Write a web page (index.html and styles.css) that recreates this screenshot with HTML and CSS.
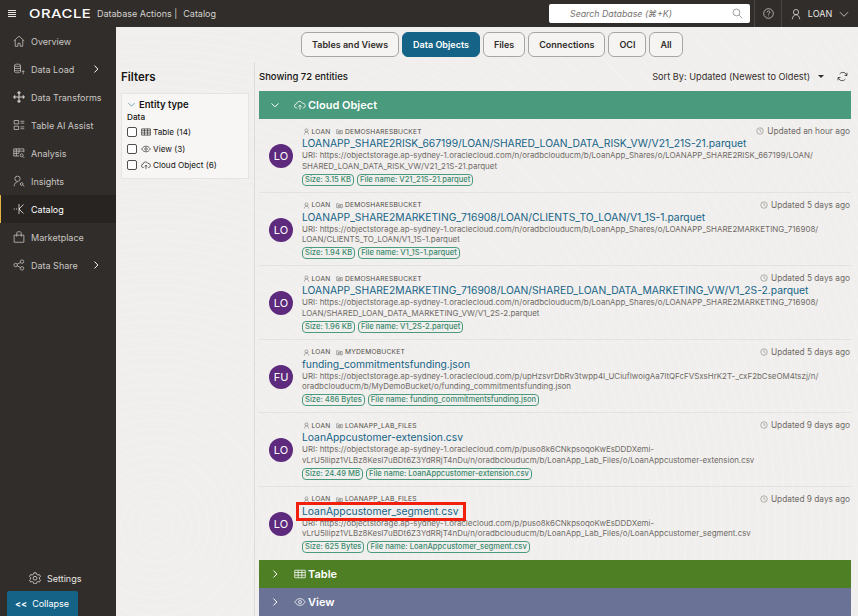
FILE: index.html
```html
<!DOCTYPE html>
<html>
  <head>
    <meta charset="utf-8">
    <title>Catalog</title>
    <link rel="stylesheet" href="styles.css">
  </head>
  <body>
    <svg class="defs" width="0" height="0">
      <symbol id="i-user" viewBox="0 0 16 16"><circle cx="8" cy="5.5" r="3.5"/><path d="M3 15c.5-4 2.500-6 5-6s4.500 2 5 6"/></symbol>
      <symbol id="i-bucket" viewBox="0 0 16 16"><path d="M1.500 13V4h4L7 5.500h7.500V13z"/><path d="M5 8h6v3H5z"/></symbol>
      <symbol id="i-clock" viewBox="0 0 16 16"><circle cx="8" cy="8" r="6.500"/><path d="M8 4v4l3 2"/></symbol>
      <symbol id="i-cloud" viewBox="0 0 16 16"><path d="M4.500 12h-1a2.700 2.700 0 0 1-.2-5.400A4 4 0 0 1 11 5.600 3.200 3.200 0 0 1 12.500 12h-1"/><path d="M8 14.500v-6M5.700 10.500 8 8.300l2.300 2.200"/></symbol>
      <symbol id="i-table" viewBox="0 0 16 16"><path d="M1 3h14v10H1zM1 6h14M1 9.500h14M5.500 3v10M10.500 3v10"/></symbol>
      <symbol id="i-eye" viewBox="0 0 16 16"><path d="M1 8c2-3 4.300-4.500 7-4.500s5 1.500 7 4.500c-2 3-4.300 4.500-7 4.500S3 11 1 8z"/><circle cx="8" cy="8" r="2"/></symbol>
      <symbol id="i-right" viewBox="0 0 16 16"><path d="M5.500 2.500 11 8l-5.500 5.500"/></symbol>
      <symbol id="i-down" viewBox="0 0 16 16"><path d="M2.500 5.500 8 11l5.500-5.500"/></symbol>
    </svg>

    <header class="topbar">
      <div class="hamburger"><span></span><span></span><span></span><span></span></div>
      <div class="logo">ORACLE</div>
      <div class="product">Database Actions |</div>
      <div class="product page-name">Catalog</div>
      <div class="search">
        <span>Search Database (⌘+K)</span>
        <svg class="icon search-icon" viewBox="0 0 16 16"><circle cx="6.500" cy="6.500" r="5"/><path d="M10.200 10.200 15 15"/></svg>
      </div>
      <div class="top-cell help-cell">
        <svg class="icon help-icon" viewBox="0 0 16 16"><circle cx="8" cy="8" r="7"/><path d="M6 6.300C6 5 7 4.300 8 4.300S10 5 10 6.200C10 7.700 8 7.800 8 9.500M8 11v1"/></svg>
      </div>
      <div class="top-cell user-cell">
        <svg class="icon user-icon"><use href="#i-user"/></svg>
        <span>LOAN</span>
        <svg class="icon user-chevron"><use href="#i-down"/></svg>
      </div>
    </header>

    <div class="shell">
      <nav class="sidebar">
        <a class="nav-item">
          <svg class="icon nav-icon" viewBox="0 0 16 16"><path d="M1 8 8 1.500 15 8M3 6.500V15h3.500v-4h3v4H13V6.500"/></svg>
          <span>Overview</span>
        </a>
        <a class="nav-item">
          <svg class="icon nav-icon" viewBox="0 0 16 16"><path d="M2 3c0-2 8-2 8 0v8.500c0 1-2 1.500-4 1.500s-4-.5-4-1.500zM2 3c0 2 8 2 8 0M2 6.500c1.500 1.300 6.500 1.300 8 0M2 9.500c1.500 1.300 6.500 1.300 8 0M13.500 15v-4.500M11.800 12l1.700-1.700 1.700 1.700"/></svg>
          <span>Data Load</span>
          <svg class="icon nav-chevron"><use href="#i-right"/></svg>
        </a>
        <a class="nav-item">
          <svg class="icon nav-icon" viewBox="0 0 16 16"><path d="M8 1v14M1 8h14M6 3l2-2 2 2M6 13l2 2 2-2M3 6 1 8l2 2M13 6l2 2-2 2" stroke-width="1.600"/></svg>
          <span>Data Transforms</span>
        </a>
        <a class="nav-item">
          <svg class="icon nav-icon" viewBox="0 0 16 16"><path d="M1.500 2h6v4.500h-6zM1.500 9.500h6V14h-6zM10 3h5M10 5.500h5M10 10.500h5M10 13h5"/></svg>
          <span>Table AI Assist</span>
        </a>
        <a class="nav-item">
          <svg class="icon nav-icon" viewBox="0 0 16 16"><path d="M8 12H1V2.500h13.500V7M1 5.500h13.500M1 8.500h7M4.500 2.500V12M8 2.500V8"/><circle cx="11.500" cy="11" r="2"/><path d="m13 12.500 2 2"/></svg>
          <span>Analysis</span>
        </a>
        <a class="nav-item">
          <svg class="icon nav-icon" viewBox="0 0 16 16"><circle cx="6" cy="5" r="3.500"/><path d="M1.500 15c.3-3.500 2-5.500 4.500-5.500"/><circle cx="11.500" cy="12" r="1.800"/><path d="m13 13.500 2 1.500"/></svg>
          <span>Insights</span>
        </a>
        <a class="nav-item nav-active">
          <svg class="icon nav-icon" viewBox="0 0 16 16"><path d="M1 8h1.500M4 8h1.500M14 2 8 8l6 6M8 8h1M8 1.500v13"/></svg>
          <span>Catalog</span>
        </a>
        <a class="nav-item">
          <svg class="icon nav-icon" viewBox="0 0 16 16"><path d="M1.500 5.500h13V15h-13zM5 7.500v-5C5 1.500 6 1 8 1s3 .5 3 1.500v5"/></svg>
          <span>Marketplace</span>
        </a>
        <a class="nav-item">
          <svg class="icon nav-icon" viewBox="0 0 16 16"><circle cx="3.500" cy="8" r="2.300"/><circle cx="12" cy="3.500" r="2.300"/><circle cx="12" cy="12.500" r="2.300"/><path d="m5.500 7 4.500-2.500M5.500 9l4.500 2.500"/></svg>
          <span>Data Share</span>
          <svg class="icon nav-chevron"><use href="#i-right"/></svg>
        </a>
        <div class="side-foot">
          <a class="settings">
            <svg class="icon settings-icon" viewBox="0 0 16 16"><path d="M6.500 1h3l.5 2 1.800 1 2-.6 1.500 2.600-1.500 1.400v2l1.500 1.400-1.500 2.600-2-.6-1.800 1-.5 2h-3l-.5-2-1.800-1-2 .6L.7 10.800l1.500-1.400v-2L.7 6l1.500-2.600 2 .6L6 3z"/><circle cx="8" cy="8.300" r="2.500"/></svg>
            <span>Settings</span>
          </a>
          <a class="collapse"><span class="collapse-arrows">&lt;&lt;</span><span>Collapse</span></a>
        </div>
      </nav>

      <main class="content">
        <div class="tabs">
          <a class="tab">Tables and Views</a>
          <a class="tab tab-on">Data Objects</a>
          <a class="tab">Files</a>
          <a class="tab">Connections</a>
          <a class="tab">OCI</a>
          <a class="tab">All</a>
        </div>

        <div class="columns">
          <aside class="filters">
            <h2 class="filters-title">Filters</h2>
            <div class="filter-card">
              <div class="filter-head">
                <svg class="icon filter-chevron"><use href="#i-down"/></svg>
                <span>Entity type</span>
              </div>
              <div class="filter-group">Data</div>
              <label class="filter-row"><span class="check"></span><svg class="icon filter-icon"><use href="#i-table"/></svg><span>Table (14)</span></label>
              <label class="filter-row"><span class="check"></span><svg class="icon filter-icon"><use href="#i-eye"/></svg><span>View (3)</span></label>
              <label class="filter-row"><span class="check"></span><svg class="icon filter-icon"><use href="#i-cloud"/></svg><span>Cloud Object (6)</span></label>
            </div>
          </aside>

          <section class="results">
            <div class="results-top">
              <span class="count">Showing 72 entities</span>
              <span class="sort">Sort By: Updated (Newest to Oldest)</span>
              <span class="caret"></span>
              <svg class="icon refresh" viewBox="0 0 16 16"><path d="M14 6.500C13.300 3.500 11 2 8.500 2 6.500 2 5 3 3.800 4.300M2 9.500C2.700 12.500 5 14 7.500 14c2 0 3.500-1 4.700-2.300"/><path d="M14.500 2.500v4H11M1.500 13.500v-4H5"/></svg>
            </div>

            <div class="band band-green">
              <svg class="icon band-chevron"><use href="#i-down"/></svg>
              <svg class="icon band-icon"><use href="#i-cloud"/></svg>
              <span>Cloud Object</span>
            </div>

            <article class="entity">
              <div class="avatar">LO</div>
              <div class="entity-body">
                <div class="meta"><svg class="icon meta-icon"><use href="#i-user"/></svg>LOAN<svg class="icon meta-icon meta-gap"><use href="#i-bucket"/></svg>DEMOSHARESBUCKET</div>
                <a class="entity-title">LOANAPP_SHARE2RISK_667199/LOAN/SHARED_LOAN_DATA_RISK_VW/V21_21S-21.parquet</a>
                <p class="uri">URI: https://objectstorage.ap-sydney-1.oraclecloud.com/n/oradbclouducm/b/LoanApp_Shares/o/LOANAPP_SHARE2RISK_667199/LOAN/<br>SHARED_LOAN_DATA_RISK_VW/V21_21S-21.parquet</p>
                <div class="chips"><span class="chip">Size: 3.15 KB</span><span class="chip">File name: V21_21S-21.parquet</span></div>
              </div>
              <div class="updated"><svg class="icon clock"><use href="#i-clock"/></svg>Updated an hour ago</div>
            </article>

            <article class="entity">
              <div class="avatar">LO</div>
              <div class="entity-body">
                <div class="meta"><svg class="icon meta-icon"><use href="#i-user"/></svg>LOAN<svg class="icon meta-icon meta-gap"><use href="#i-bucket"/></svg>DEMOSHARESBUCKET</div>
                <a class="entity-title">LOANAPP_SHARE2MARKETING_716908/LOAN/CLIENTS_TO_LOAN/V1_1S-1.parquet</a>
                <p class="uri">URI: https://objectstorage.ap-sydney-1.oraclecloud.com/n/oradbclouducm/b/LoanApp_Shares/o/LOANAPP_SHARE2MARKETING_716908/<br>LOAN/CLIENTS_TO_LOAN/V1_1S-1.parquet</p>
                <div class="chips"><span class="chip">Size: 1.94 KB</span><span class="chip">File name: V1_1S-1.parquet</span></div>
              </div>
              <div class="updated"><svg class="icon clock"><use href="#i-clock"/></svg>Updated 5 days ago</div>
            </article>

            <article class="entity">
              <div class="avatar">LO</div>
              <div class="entity-body">
                <div class="meta"><svg class="icon meta-icon"><use href="#i-user"/></svg>LOAN<svg class="icon meta-icon meta-gap"><use href="#i-bucket"/></svg>DEMOSHARESBUCKET</div>
                <a class="entity-title">LOANAPP_SHARE2MARKETING_716908/LOAN/SHARED_LOAN_DATA_MARKETING_VW/V1_2S-2.parquet</a>
                <p class="uri">URI: https://objectstorage.ap-sydney-1.oraclecloud.com/n/oradbclouducm/b/LoanApp_Shares/o/LOANAPP_SHARE2MARKETING_716908/<br>LOAN/SHARED_LOAN_DATA_MARKETING_VW/V1_2S-2.parquet</p>
                <div class="chips"><span class="chip">Size: 1.96 KB</span><span class="chip">File name: V1_2S-2.parquet</span></div>
              </div>
              <div class="updated"><svg class="icon clock"><use href="#i-clock"/></svg>Updated 5 days ago</div>
            </article>

            <article class="entity">
              <div class="avatar">FU</div>
              <div class="entity-body">
                <div class="meta"><svg class="icon meta-icon"><use href="#i-user"/></svg>LOAN<svg class="icon meta-icon meta-gap"><use href="#i-bucket"/></svg>MYDEMOBUCKET</div>
                <a class="entity-title">funding_commitmentsfunding.json</a>
                <p class="uri">URI: https://objectstorage.ap-sydney-1.oraclecloud.com/p/upHzsvrDbRv3twpp4I_UCiufIwoigAa7ItQFcFVSxsHrK2T-_cxF2bCseOM4tszj/n/<br>oradbclouducm/b/MyDemoBucket/o/funding_commitmentsfunding.json</p>
                <div class="chips"><span class="chip">Size: 486 Bytes</span><span class="chip">File name: funding_commitmentsfunding.json</span></div>
              </div>
              <div class="updated"><svg class="icon clock"><use href="#i-clock"/></svg>Updated 5 days ago</div>
            </article>

            <article class="entity">
              <div class="avatar">LO</div>
              <div class="entity-body">
                <div class="meta"><svg class="icon meta-icon"><use href="#i-user"/></svg>LOAN<svg class="icon meta-icon meta-gap"><use href="#i-bucket"/></svg>LOANAPP_LAB_FILES</div>
                <a class="entity-title">LoanAppcustomer-extension.csv</a>
                <p class="uri">URI: https://objectstorage.ap-sydney-1.oraclecloud.com/p/puso8k6CNkpsoqoKwEsDDDXemi-<br>vLrU5Ilipz1VLBz8KesI7uBDt6Z3YdRRjT4nDu/n/oradbclouducm/b/LoanApp_Lab_Files/o/LoanAppcustomer-extension.csv</p>
                <div class="chips"><span class="chip">Size: 24.49 MB</span><span class="chip">File name: LoanAppcustomer-extension.csv</span></div>
              </div>
              <div class="updated"><svg class="icon clock"><use href="#i-clock"/></svg>Updated 9 days ago</div>
            </article>

            <article class="entity entity-last">
              <div class="avatar">LO</div>
              <div class="entity-body">
                <div class="meta"><svg class="icon meta-icon"><use href="#i-user"/></svg>LOAN<svg class="icon meta-icon meta-gap"><use href="#i-bucket"/></svg>LOANAPP_LAB_FILES</div>
                <a class="entity-title entity-marked">LoanAppcustomer_segment.csv</a>
                <p class="uri">URI: https://objectstorage.ap-sydney-1.oraclecloud.com/p/puso8k6CNkpsoqoKwEsDDDXemi-<br>vLrU5Ilipz1VLBz8KesI7uBDt6Z3YdRRjT4nDu/n/oradbclouducm/b/LoanApp_Lab_Files/o/LoanAppcustomer_segment.csv</p>
                <div class="chips"><span class="chip">Size: 625 Bytes</span><span class="chip">File name: LoanAppcustomer_segment.csv</span></div>
              </div>
              <div class="updated"><svg class="icon clock"><use href="#i-clock"/></svg>Updated 9 days ago</div>
            </article>

            <div class="band band-olive">
              <svg class="icon band-chevron"><use href="#i-right"/></svg>
              <svg class="icon band-icon"><use href="#i-table"/></svg>
              <span>Table</span>
            </div>
            <div class="band band-slate">
              <svg class="icon band-chevron"><use href="#i-right"/></svg>
              <svg class="icon band-icon"><use href="#i-eye"/></svg>
              <span>View</span>
            </div>
          </section>
        </div>
      </main>
    </div>
  </body>
</html>
```

FILE: styles.css
```css
* {
  box-sizing: border-box;
}

html, body {
  margin: 0;
  height: 100%;
  overflow: hidden;
}

body {
  font-family: Inter, "Liberation Sans", sans-serif;
  font-size: 9px;
  color: #161513;
  background-color: #f1efed;
}

.defs {
  position: absolute;
}

.icon {
  display: block;
  flex: none;
  fill: none;
  stroke: currentColor;
  stroke-width: 1;
}

/* top bar */
.topbar {
  display: flex;
  align-items: center;
  height: 27px;
  background-color: #312d2a;
  color: #e8e6e3;
}

.hamburger {
  width: 8px;
  margin-left: 8px;
  display: flex;
  flex-direction: column;
  gap: 1px;
}

.hamburger span {
  height: 1px;
  background-color: #e8e6e3;
}

.logo {
  width: 65px;
  margin-left: 13px;
  font-size: 12px;
  font-weight: 500;
  letter-spacing: 0.4px;
  color: #fff;
  transform: scaleX(1.24);
  transform-origin: left;
}

.product {
  margin-left: 3px;
  font-size: 9px;
  white-space: nowrap;
  color: #d5d3d0;
}

.page-name {
  margin-left: 6px;
}

.search {
  display: flex;
  align-items: center;
  justify-content: space-between;
  width: 201px;
  height: 19px;
  margin-left: auto;
  padding: 0 7px 0 21px;
  background-color: #fff;
  border-radius: 2px;
  font-size: 8.8px;
  font-style: italic;
  color: #77736f;
}

.search-icon {
  width: 11px;
  height: 11px;
  color: #77736f;
}

.top-cell {
  display: flex;
  align-items: center;
  justify-content: center;
  height: 27px;
  border-left: 1px solid #4a4643;
}

.help-cell {
  width: 27px;
  margin-left: 4px;
}

.help-icon {
  width: 11px;
  height: 11px;
}

.user-cell {
  width: 77px;
  gap: 6px;
  font-size: 9px;
}

.user-icon {
  width: 12px;
  height: 12px;
}

.user-chevron {
  width: 12px;
  height: 12px;
}

/* sidebar */
.shell {
  display: flex;
  height: 589px;
}

.sidebar {
  display: flex;
  flex-direction: column;
  flex: none;
  width: 116px;
  background-color: #312d2a;
  color: #c9c7c4;
  font-size: 9px;
}

.nav-item {
  display: flex;
  align-items: center;
  flex: none;
  height: 28px;
  padding-left: 13px;
}

.nav-icon {
  width: 12px;
  height: 12px;
  margin-right: 6px;
}

.nav-chevron {
  width: 10px;
  height: 10px;
  margin-left: auto;
  margin-right: 15px;
  color: #fff;
  stroke-width: 1.6;
}

.nav-active {
  background-color: #272421;
  border-left: 1px solid #e5b53e;
  padding-left: 12px;
  color: #fff;
}

.side-foot {
  margin-top: auto;
  display: flex;
  flex-direction: column;
}

.settings {
  display: flex;
  align-items: center;
  gap: 6px;
  height: 24px;
  margin-bottom: 1px;
  padding-left: 29px;
  color: #e8e6e3;
}

.settings-icon {
  width: 12px;
  height: 12px;
}

.collapse {
  display: flex;
  align-items: center;
  gap: 5px;
  width: 71px;
  height: 25px;
  margin-left: 7px;
  padding-left: 8px;
  background-color: #156488;
  border-radius: 2px 2px 0 0;
  color: #fff;
}

.collapse-arrows {
  font-weight: 600;
}

/* main area */
.content {
  flex: 1;
  min-width: 0;
  background-color: #f1efed;
  background-image: repeating-radial-gradient(circle at 40px 500px, transparent 0, transparent 7px, rgba(255, 255, 255, 0.22) 8px, transparent 9px);
}

.tabs {
  display: flex;
  gap: 3px;
  height: 35px;
  padding-top: 5px;
  margin-left: 185px;
}

.tab {
  display: flex;
  align-items: center;
  height: 25px;
  padding: 0 10px;
  border: 1px solid #a9a5a1;
  border-radius: 6px;
  background-color: #f5f4f2;
  font-size: 9px;
  font-weight: 600;
  color: #312d2a;
  white-space: nowrap;
}

.tab-on {
  background-color: #156488;
  border-color: #156488;
  color: #fff;
}

.columns {
  display: flex;
  height: 554px;
}

.filters {
  flex: none;
  width: 139px;
  padding: 0 5px;
  border-right: 1px solid #dedcd9;
}

.filters-title {
  margin: 8px 0;
  font-size: 11.5px;
  line-height: 15px;
  font-weight: 600;
}

.filter-card {
  width: 128px;
  height: 86px;
  padding: 5px 5px;
  background-color: #f7f6f5;
  border: 1px solid #e6e4e1;
  font-size: 8.2px;
}

.filter-head {
  display: flex;
  align-items: center;
  gap: 3px;
  font-size: 9.5px;
  font-weight: 600;
}

.filter-chevron {
  width: 9px;
  height: 9px;
  color: #156488;
}

.filter-group {
  margin-top: 1px;
  font-weight: 500;
  line-height: 13px;
}

.filter-row {
  display: flex;
  align-items: center;
  height: 16.5px;
}

.check {
  width: 10px;
  height: 10px;
  margin-right: 4px;
  border: 1px solid #4f4c49;
  border-radius: 2px;
  background-color: #fff;
}

.filter-icon {
  width: 10px;
  height: 10px;
  margin-right: 2px;
}

.results {
  flex: 1;
  min-width: 0;
  padding: 0 7px 0 4px;
}

.results-top {
  display: flex;
  align-items: center;
  height: 29px;
  padding-right: 3px;
  font-size: 9.5px;
}

.count {
  font-weight: 500;
}

.sort {
  margin-left: auto;
  font-size: 9.2px;
  color: #312d2a;
}

.caret {
  margin: 0 13px 0 8px;
  border: 3px solid transparent;
  border-top: 3px solid #312d2a;
  border-bottom: 0;
}

.refresh {
  width: 11px;
  height: 11px;
}

.band {
  display: flex;
  align-items: center;
  height: 28px;
  color: #fff;
  font-size: 11px;
  font-weight: 600;
}

.band-green {
  background-color: #4a9a7d;
}

.band-olive {
  background-color: #4f7f24;
}

.band-slate {
  background-color: #6a7395;
}

.band-chevron {
  width: 10px;
  height: 10px;
  margin: 0 14px 0 11px;
  stroke-width: 1.6;
}

.band-icon {
  width: 12px;
  height: 12px;
  margin-right: 2px;
}

/* result rows */
.entity {
  display: flex;
  position: relative;
  height: 73.5px;
  padding: 8px 0 0 10px;
  border-bottom: 1px solid #e4e2df;
}

.entity-last {
  border-bottom: 0;
  height: 73px;
}

.avatar {
  display: flex;
  align-items: center;
  justify-content: center;
  flex: none;
  width: 24px;
  height: 24px;
  margin-top: 17px;
  margin-right: 9px;
  border-radius: 50%;
  background-color: #5d2a7d;
  color: #fff;
  font-size: 11px;
}

.entity-body {
  min-width: 0;
  flex: 1;
}

.meta {
  display: flex;
  align-items: center;
  height: 9px;
  padding-left: 1px;
  font-size: 6.7px;
  letter-spacing: 0.2px;
  color: #4f4c49;
}

.meta-icon {
  width: 7px;
  height: 7px;
  margin-right: 1.5px;
}

.meta-gap {
  margin-left: 6px;
}

.entity-title {
  display: block;
  margin-top: 1px;
  font-size: 10.3px;
  line-height: 13px;
  color: #156488;
  white-space: nowrap;
}

.entity-marked {
  width: 164px;
  margin-left: -3px;
  padding-left: 3px;
  outline: 3px solid #f21f0d;
}

.uri {
  margin: 0;
  font-size: 7.95px;
  line-height: 10.5px;
  color: #6f6b67;
  white-space: nowrap;
}

.chips {
  display: flex;
  gap: 3px;
  margin-top: 2.5px;
}

.chip {
  height: 12px;
  padding: 0 2px;
  border: 1px solid #4a9a7d;
  border-radius: 4px;
  font-size: 7.6px;
  line-height: 10px;
  font-weight: 500;
  color: #3b8a6e;
  white-space: nowrap;
}

.updated {
  display: flex;
  align-items: center;
  position: absolute;
  top: 7px;
  right: 1px;
  font-size: 8.3px;
  color: #6f6b67;
}

.clock {
  width: 8px;
  height: 8px;
  margin-right: 3px;
}
```
